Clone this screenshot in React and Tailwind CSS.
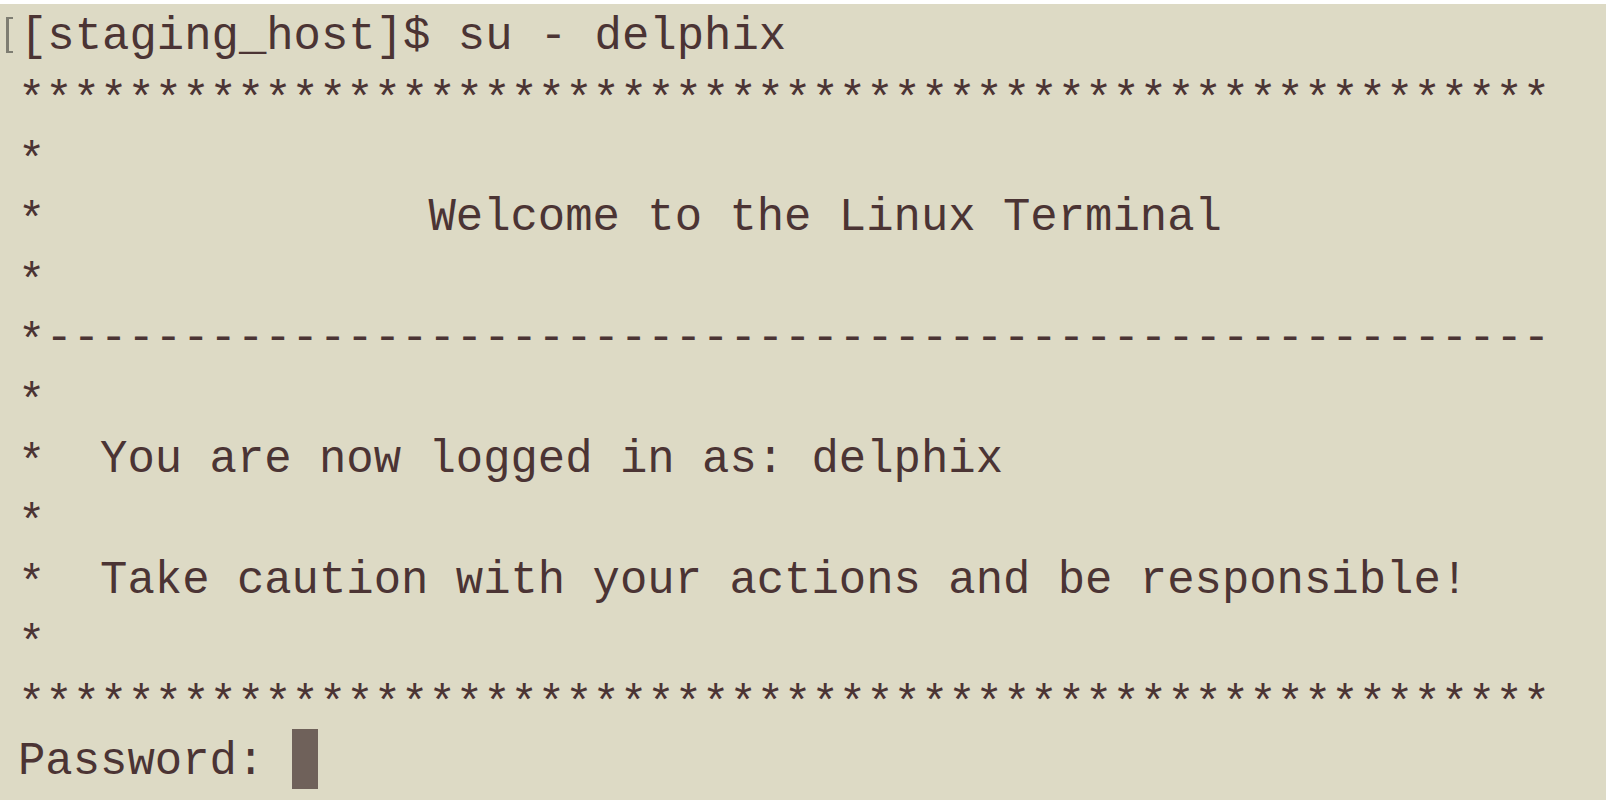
const stars = '*'.repeat(56)
const dashes = '*' + '-'.repeat(55)

const lines = [
  stars,
  '*',
  '*              Welcome to the Linux Terminal',
  '*',
  dashes,
  '*',
  '*  You are now logged in as: delphix',
  '*',
  '*  Take caution with your actions and be responsible!',
  '*',
  stars,
]

// courier's asterisk sits lower than the one in Liberation Mono
function Line({ text }) {
  const parts = text.match(/\*+|[^*]+/g)
  return (
    <div className="h-[60.4px]">
      {parts.map((p, i) =>
        p[0] === '*' ? (
          <span key={i} className="align-[-4px]">{p}</span>
        ) : (
          <span key={i}>{p}</span>
        )
      )}
    </div>
  )
}

export default function App() {
  return (
    <div className="w-full h-[808px] bg-white pt-[4px]">
      <div
        className="w-[1606px] h-[796px] bg-[#dddac5] text-[#4b3434] text-[45.6px] leading-[60.4px] whitespace-pre pt-[3px]"
        style={{ fontFamily: '"Liberation Mono", "Courier New", monospace' }}
      >
        <div className="flex items-center h-[60.4px]">
          <span className="ml-[6px] -mt-[4px] w-[7px] h-[36px] border-l-[3px] border-y-[2px] border-[#7e7d72]" />
          <span className="ml-[7px]">[staging_host]$ su - delphix</span>
        </div>
        <div className="pl-[18px]">
          {lines.map((l, i) => (
            <Line key={i} text={l} />
          ))}
          <div className="flex items-center h-[60.4px]">
            <span>Password: </span>
            <span className="w-[26px] h-[60px] -mt-[5px] bg-[#6f615a]" />
          </div>
        </div>
      </div>
    </div>
  )
}
